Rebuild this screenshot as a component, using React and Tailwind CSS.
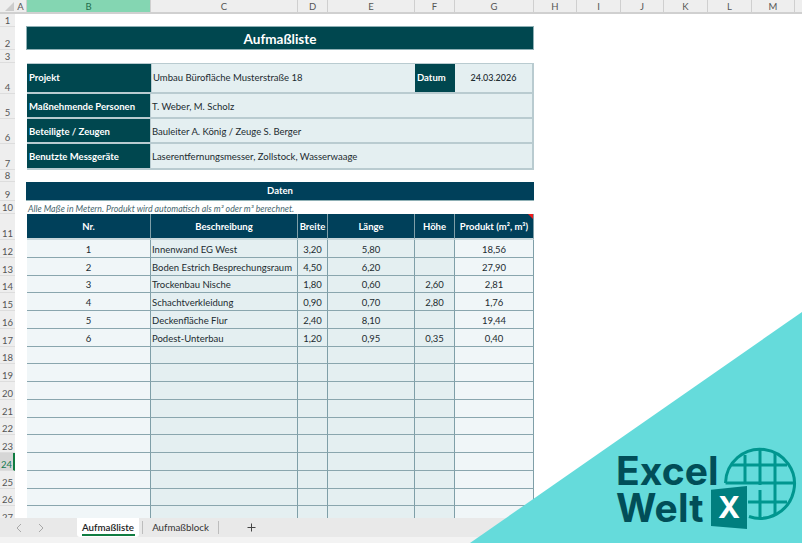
const rowNums = [
  [1, 13], [2, 23], [3, 13], [4, 31], [5, 25], [6, 25], [7, 26], [8, 12], [9, 19], [10, 13], [11, 26],
  ...Array.from({ length: 16 }, (_, i) => [12 + i, 17.75]),
];
const cols = [["A", 12], ["B", 124], ["C", 147], ["D", 30], ["E", 87], ["F", 40], ["G", 79], ["H", 43], ["I", 44], ["J", 43], ["K", 44], ["L", 44], ["M", 43]];
const data = [
  ["1", "Innenwand EG West", "3,20", "5,80", "", "18,56"],
  ["2", "Boden Estrich Besprechungsraum", "4,50", "6,20", "", "27,90"],
  ["3", "Trockenbau Nische", "1,80", "0,60", "2,60", "2,81"],
  ["4", "Schachtverkleidung", "0,90", "0,70", "2,80", "1,76"],
  ["5", "Deckenfläche Flur", "2,40", "8,10", "", "19,44"],
  ["6", "Podest-Unterbau", "1,20", "0,95", "0,35", "0,40"],
];
const rows = [...data, ...Array.from({ length: 10 }, () => ["", "", "", "", "", ""])];

function InfoRow({ label, value, h }) {
  return (
    <div className="flex border-b-2 border-[#b9cbd0]" style={{ height: h }}>
      <div className="w-[124px] shrink-0 bg-[#00474f] text-white font-bold pl-[2px] pt-[3px] flex items-center border-r border-[#b9cbd0] whitespace-nowrap">{label}</div>
      <div className="flex-1 bg-[#e4eff1] pl-[1px] pt-[3px] flex items-center text-[#1c2b30] whitespace-nowrap">{value}</div>
    </div>
  );
}

function Logo() {
  return (
    <div className="absolute left-[470px] top-[312px] w-[332px] h-[231px]">
      <svg className="absolute inset-0" width="332" height="231" viewBox="0 0 332 231">
        <polygon points="0,231 332,0 332,231" fill="#65dbdb" />
      </svg>
      <div className="absolute left-[146px] top-[140px] text-[#014e58] font-bold text-[39px] leading-[37px] tracking-[0.1px] font-['Inter',sans-serif]">
        <div>Excel</div>
        <div>Welt</div>
      </div>
      <svg className="absolute left-[254px] top-[135px]" width="74" height="74" viewBox="0 0 74 74" fill="none">
        <g stroke="#00968f" strokeWidth="3">
          <path d="M1.5 36 A34.5 34.5 0 1 1 25 69.5" />
          <path d="M1.5 36 H70" />
          <path d="M8 18 H63" />
          <path d="M24 55 H63" />
          <path d="M21 8 V36" />
          <path d="M36 2 V38" />
          <path d="M36 43 V71" />
          <path d="M51 5 V68" />
        </g>
      </svg>
      <div className="absolute left-[241px] top-[174px] w-[36px] h-[43px] bg-[#007f7f] text-white font-bold text-[30px] flex items-center justify-center font-['Inter',sans-serif] [clip-path:polygon(0_9%,100%_0,100%_100%,0_93%)]">
        X
      </div>
    </div>
  );
}

export default function App() {
  return (
    <div className="relative w-[802px] h-[543px] overflow-hidden bg-white text-[9.5px] text-[#1c2b30] font-['Lato',sans-serif]">
      <div className="flex h-[14px] bg-[#eeeeee] border-b-2 border-[#d0d0d0] text-[#555] text-[9.5px] leading-[13px]">
        <div className="w-[15px] shrink-0 relative">
          <svg className="absolute right-[1px] bottom-[1px]" width="9" height="9" viewBox="0 0 9 9"><polygon points="9,0 9,9 0,9" fill="#cccccc" /></svg>
        </div>
        {cols.map(([n, w]) => (
          <div key={n} style={{ width: w }} className={"shrink-0 text-center border-r border-[#cfcfcf] " + (n === "B" ? "bg-[#84d6b2] text-[#1f6e4c]" : "")}>{n}</div>
        ))}
      </div>

      <div className="flex h-[504px] overflow-hidden">
        <div className="w-[15px] shrink-0 bg-[#eeeeee] text-[9.5px] text-[#555]">
          {rowNums.map(([n, h]) => (
            <div key={n} style={{ height: h }} className={"flex items-end justify-center border-b border-[#dddddd] leading-[10px] " + (n === 24 ? "bg-[#d6d6d6] text-[#137a50] border-r-2 border-r-[#107c41]" : "")}>{n}</div>
          ))}
        </div>

        <div className="w-[12px] shrink-0" />

        <div className="w-[508px] shrink-0 -ml-[1px] pt-[12px]">
          <div className="h-[24px] pt-[2px] bg-[#00474f] text-white font-bold text-[13.5px] flex items-center justify-center border border-[#8fb0b5]">Aufmaßliste</div>
          <div className="h-[13px]" />

          <div className="ml-[1px] border-r-2 border-t border-[#b9cbd0]">
            <div className="flex h-[30px] border-b-2 border-[#b9cbd0]">
              <div className="w-[124px] shrink-0 bg-[#00474f] text-white font-bold pl-[2px] flex items-center">Projekt</div>
              <div className="w-[264px] shrink-0 bg-[#e4eff1] pl-[1px] flex items-center border-l border-[#b9cbd0] whitespace-nowrap">Umbau Bürofläche Musterstraße 18</div>
              <div className="w-[40px] shrink-0 bg-[#00474f] text-white font-bold pl-[2px] flex items-center">Datum</div>
              <div className="flex-1 bg-[#e4eff1] flex items-center justify-center text-[9px] font-medium">24.03.2026</div>
            </div>
            <InfoRow label="Maßnehmende Personen" value="T. Weber, M. Scholz" h={25} />
            <InfoRow label="Beteiligte / Zeugen" value="Bauleiter A. König / Zeuge S. Berger" h={25} />
            <InfoRow label="Benutzte Messgeräte" value="Laserentfernungsmesser, Zollstock, Wasserwaage" h={26} />
          </div>

          <div className="h-[12px]" />
          <div className="h-[19px] pt-[1px] bg-[#00405a] text-white font-bold flex items-center justify-center border-b border-[#8fb0b5]">Daten</div>
          <div className="h-[13px] italic text-[8.75px] text-[#47666e] pl-[2px] leading-[15px] whitespace-nowrap">Alle Maße in Metern. Produkt wird automatisch als m² oder m³ berechnet.</div>

          <div className="ml-[1px] grid grid-cols-[124px_147px_30px_87px_40px_79px]">
            {["Nr.", "Beschreibung", "Breite", "Länge", "Höhe", "Produkt (m², m³)"].map((h, i) => (
              <div key={h} className="relative h-[26px] pt-[2px] bg-[#00405a] text-white font-bold flex items-center justify-center whitespace-nowrap border-r border-[#7f9fa8] border-b-2 border-b-[#c7d6da]">
                {h}
                {i === 5 && <span className="absolute top-0 right-0 w-0 h-0 border-t-[5px] border-l-[5px] border-t-[#f01c1c] border-l-transparent" />}
              </div>
            ))}
            {rows.map((r, ri) =>
              r.map((v, ci) => (
                <div key={ri + "-" + ci} className={"h-[17.75px] pt-[3px] flex items-center whitespace-nowrap border-r border-b border-b-[#8aa6ae] border-r-[#7f9fa8] " + (ci === 1 ? "pl-[1px] " : "justify-center ") + (ci === 0 || ci === 5 ? "bg-[#f0f6f8]" : "bg-[#e4eff1]")}>
                  {v}
                </div>
              ))
            )}
          </div>
        </div>
      </div>

      <div className="absolute left-0 right-0 top-[518px] h-[25px] bg-[#f3f3f3] text-[9.75px]">
        <div className="flex items-center h-[19px] bg-[#e9e9e9] text-[#555]">
          <svg className="ml-[15px]" width="8" height="10" viewBox="0 0 8 10" fill="none" stroke="#a8a8a8" strokeWidth="1"><path d="M6 1 L2 5 L6 9" /></svg>
          <svg className="ml-[14px]" width="8" height="10" viewBox="0 0 8 10" fill="none" stroke="#a8a8a8" strokeWidth="1"><path d="M2 1 L6 5 L2 9" /></svg>
          <div className="ml-[32px] w-[62px] h-[19px] bg-white rounded-b-[3px] flex flex-col items-center justify-center font-semibold text-[#222]">
            <span className="leading-[14px] pt-[1px]">Aufmaßliste</span>
            <span className="w-[53px] h-[2px] bg-[#107c41]" />
          </div>
          <div className="ml-[3px] h-[13px] border-l border-[#bdbdbd]" />
          <div className="w-[75px] text-center text-[#333] whitespace-nowrap">Aufmaßblock</div>
          <div className="h-[13px] border-l border-[#bdbdbd]" />
          <svg className="ml-[28px]" width="9" height="9" viewBox="0 0 9 9" stroke="#444" strokeWidth="1"><path d="M4.5 0.5 V8.5 M0.5 4.5 H8.5" /></svg>
        </div>
      </div>

      <Logo />
    </div>
  );
}
